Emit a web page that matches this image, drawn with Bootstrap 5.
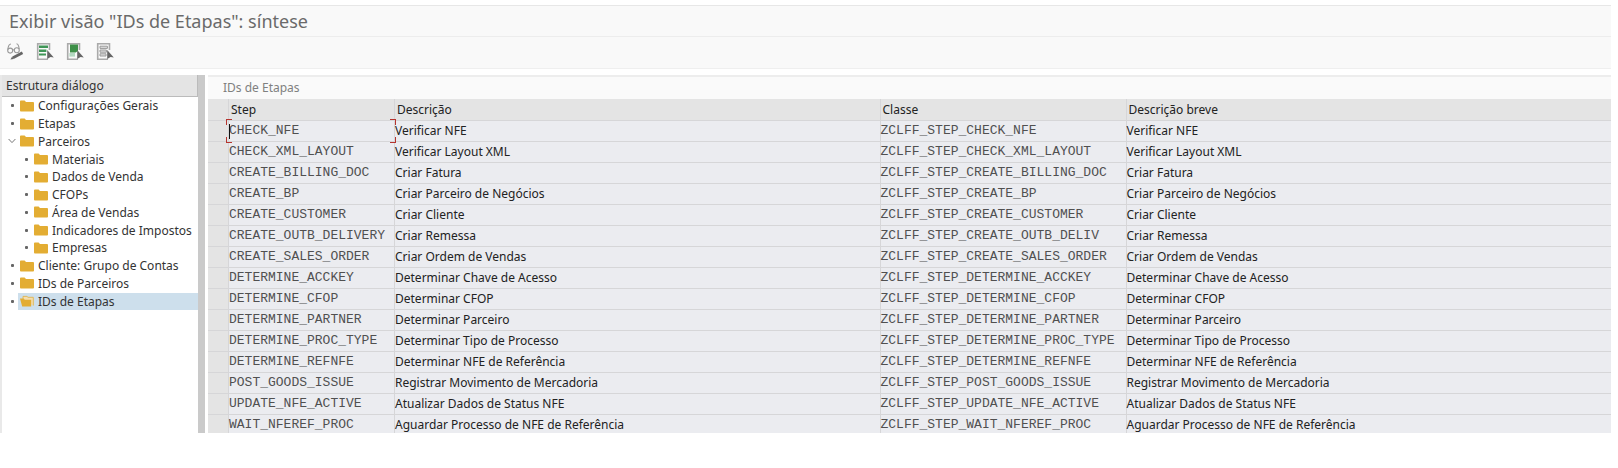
<!DOCTYPE html>
<html lang="pt-BR">
<head>
<meta charset="utf-8">
<meta name="viewport" content="width=device-width, initial-scale=1">
<title>IDs de Etapas</title>
<link href="https://cdn.jsdelivr.net/npm/bootstrap@5.3.0/dist/css/bootstrap.min.css" rel="stylesheet">
<style>
  body { font: 12px/18px "Noto Sans", "Open Sans", sans-serif; color: #333; background: #fff; }
  .app { padding: 5px 7px 0 0; }
  .titlebar { background: #f9f9f9; border-top: 1px solid #e7e7e7; border-bottom: 1px solid #ededed; padding: 0 9px; }
  .titlebar h1 { font-size: 18px; line-height: 30px; color: #6a6a6a; font-weight: 400; }
  .toolbar { background: #f9f9f9; border-bottom: 1px solid #efefef; gap: 10px; padding: 5px 6px 6px; margin-bottom: 6px; }
  .tool { width: 20px; height: 20px; padding: 0; border: 0; background: none; }
  .tool svg { display: block; }

  .tree-pane { width: 198px; border-left: 2px solid #e9e9e9; }
  .tree-head { background: #e4e4e4; border: solid #bbb; border-width: 0 1px 1px 0; padding: 1px 0 0 4px; line-height: 20px; font-size: 12px; }
  .tree { display: grid; grid-auto-rows: 1fr; height: 213px; list-style: none; margin: 0; padding: 0; }
  .tree li, .tree ul { display: contents; }
  .tree ul .node { padding-left: 14px; }
  .tree a { color: inherit; text-decoration: none; flex: 1; display: flex; align-items: center; gap: 4px; padding-left: 2px; white-space: nowrap; line-height: 17px; }
  .node { display: flex; align-items: center; min-height: 0; }
  .mark-box { width: 16px; display: flex; justify-content: center; padding-left: 4px; }
  .dot { width: 3px; height: 3px; border-radius: 1px; background: #666; }
  .picked a { background: #cddfec; }
  .splitter { width: 7px; background: #cacaca; margin-right: 3px; }

  .grid-pane { min-width: 0; height: 358px; overflow: hidden; border-top: 2px solid #ededed; }
  .grid-title { background: #fafafa; color: #808080; line-height: 22px; padding-left: 15px; }
  .data-grid { width: 100%; table-layout: fixed; border-collapse: separate; border-spacing: 0; line-height: 20px; }
  .data-grid th, .data-grid td { white-space: nowrap; padding: 0; height: 21px; border: solid #d6d6d8; border-width: 0 0 1px 1px; background: #ebecf0; color: #222; }
  .data-grid th { font-weight: 400; background: #e4e4e4; padding-left: 2px; line-height: 21px; }
  .data-grid .sel { border-left: 0; background: #e4e4e4; }
  .data-grid .code { font-family: "Liberation Mono", monospace; font-size: 13px; color: #505050; }
  .sel { width: 20px; }
  .col-step { width: 166px; }
  .col-class { width: 246px; }
  .active-cell { position: relative; }
  .active-cell input { display: block; width: 100%; height: 20px; padding: 0; border: 0; outline: 0; background: none; font: inherit; color: inherit; }
  .corners { position: absolute; inset: -2px -2px -2px -3px; pointer-events: none; }
  .corners i { position: absolute; width: 6px; height: 6px; border: 0 solid #b5342f; }
  .corners .tl { left: 0; top: 0; border-width: 1px 0 0 1px; }
  .corners .tr { right: 0; top: 0; border-width: 1px 1px 0 0; }
  .corners .bl { left: 0; bottom: 0; border-width: 0 0 1px 1px; }
  .corners .br { right: 0; bottom: 0; border-width: 0 1px 1px 0; }
  .caret { position: absolute; left: 0; top: 3px; width: 1px; height: 15px; background: #111; }
</style>
</head>
<body>
<svg class="d-none" xmlns="http://www.w3.org/2000/svg">
  <symbol id="folder" viewBox="0 0 14 12"><path d="M0 1.5Q0 .6 .9 .6H4.6L6 2.1H13.1Q14 2.1 14 3V10.6Q14 11.5 13.1 11.5H.9Q0 11.5 0 10.6Z" fill="#e3ad33"/></symbol>
  <symbol id="folder-open" viewBox="0 0 14 12"><path d="M3 4V1.4H7L8 2.3H13.3V10.6" fill="#f3deb0" stroke="#e0b450" stroke-width=".9"/><path d="M0 3.4H3.6L4.8 4.7H11.2V11.5H2.2Z" fill="#e3ad33"/></symbol>
  <symbol id="pointer" viewBox="0 0 8 9"><path d="M1.2 0 7.8 7.4 4.6 7 1.2 9Z" fill="#666"/></symbol>
</svg>

<div class="app">
  <header class="titlebar"><h1 class="m-0">Exibir visão "IDs de Etapas": síntese</h1></header>
  <div class="toolbar d-flex" role="toolbar" aria-label="Ações">
    <button class="tool" type="button" aria-label="Exibir / modificar">
      <svg width="20" height="20" viewBox="0 0 20 20" fill="none"><g stroke="#999" stroke-width="1.1"><circle cx="4.2" cy="8.6" r="2.5"/><circle cx="10.8" cy="8.2" r="2.5"/><path d="M6.7 8.2q.8-.8 1.6 0M1.8 7.5Q2.4 2.2 5 2M13.2 7Q12.6 2 10.5 1.8"/></g><path d="M7 15.8 16.5 10.8" stroke="#666" stroke-width="2.8"/><path d="M4.4 17.6 6.2 14.4 7.8 17Z" fill="#666"/></svg>
    </button>
    <button class="tool" type="button" aria-label="Marcar tudo">
      <svg width="20" height="20" viewBox="0 0 20 20"><path d="M13.5 8V1.7H1.7V17.3H12" fill="none" stroke="#aaa" stroke-width="1.6"/><path d="M3 3.6H12V6H3ZM3 7.6H10.4V10H3ZM3 11.4H10V13.6H3Z" fill="#3f9556"/><use href="#pointer" x="10" y="8" width="8" height="9"/></svg>
    </button>
    <button class="tool" type="button" aria-label="Marcar bloco">
      <svg width="20" height="20" viewBox="0 0 20 20"><path d="M13.5 8V1.7H1.7V17.3H12" fill="none" stroke="#aaa" stroke-width="1.6"/><path d="M4 2.6H12V9L9.6 10.6H4Z" fill="#3e9048"/><path d="M3.4 11H9V14.6H3.4Z" fill="#b2d8c0"/><use href="#pointer" x="10" y="8" width="8" height="9"/></svg>
    </button>
    <button class="tool" type="button" aria-label="Desmarcar tudo">
      <svg width="20" height="20" viewBox="0 0 20 20"><path d="M13.5 8V1.7H1.7V17.3H12" fill="none" stroke="#aaa" stroke-width="1.6"/><path d="M4 4.2H11.4V6.4H4ZM4 8H10.4V10.2H4ZM4 11.8H10V14H4Z" fill="#ddd" stroke="#999"/><use href="#pointer" x="10" y="8" width="8" height="9"/></svg>
    </button>
  </div>

  <main class="d-flex">
    <nav class="tree-pane flex-shrink-0" aria-label="Estrutura diálogo">
      <h2 class="tree-head m-0 fw-normal">Estrutura diálogo</h2>
      <ul class="tree">
        <li><div class="node"><span class="mark-box"><i class="dot"></i></span><a href="#"><svg width="14" height="12"><use href="#folder"/></svg>Configurações Gerais</a></div></li>
        <li><div class="node"><span class="mark-box"><i class="dot"></i></span><a href="#"><svg width="14" height="12"><use href="#folder"/></svg>Etapas</a></div></li>
        <li><div class="node"><span class="mark-box"><svg width="8" height="6" viewBox="0 0 8 6"><path d="M.6 1 4 4.6 7.4 1" fill="none" stroke="#777"/></svg></span><a href="#"><svg width="14" height="12"><use href="#folder"/></svg>Parceiros</a></div>
          <ul>
            <li><div class="node"><span class="mark-box"><i class="dot"></i></span><a href="#"><svg width="14" height="12"><use href="#folder"/></svg>Materiais</a></div></li>
            <li><div class="node"><span class="mark-box"><i class="dot"></i></span><a href="#"><svg width="14" height="12"><use href="#folder"/></svg>Dados de Venda</a></div></li>
            <li><div class="node"><span class="mark-box"><i class="dot"></i></span><a href="#"><svg width="14" height="12"><use href="#folder"/></svg>CFOPs</a></div></li>
            <li><div class="node"><span class="mark-box"><i class="dot"></i></span><a href="#"><svg width="14" height="12"><use href="#folder"/></svg>Área de Vendas</a></div></li>
            <li><div class="node"><span class="mark-box"><i class="dot"></i></span><a href="#"><svg width="14" height="12"><use href="#folder"/></svg>Indicadores de Impostos</a></div></li>
            <li><div class="node"><span class="mark-box"><i class="dot"></i></span><a href="#"><svg width="14" height="12"><use href="#folder"/></svg>Empresas</a></div></li>
          </ul>
        </li>
        <li><div class="node"><span class="mark-box"><i class="dot"></i></span><a href="#"><svg width="14" height="12"><use href="#folder"/></svg>Cliente: Grupo de Contas</a></div></li>
        <li><div class="node"><span class="mark-box"><i class="dot"></i></span><a href="#"><svg width="14" height="12"><use href="#folder"/></svg>IDs de Parceiros</a></div></li>
        <li><div class="node picked"><span class="mark-box"><i class="dot"></i></span><a href="#" aria-current="true"><svg width="14" height="12"><use href="#folder-open"/></svg>IDs de Etapas</a></div></li>
      </ul>
    </nav>
    <div class="splitter flex-shrink-0"></div>
    <section class="grid-pane flex-grow-1">
      <div class="grid-title" id="grid-title">IDs de Etapas</div>
      <table class="data-grid" aria-labelledby="grid-title">
        <colgroup><col class="sel"><col class="col-step"><col><col class="col-class"><col></colgroup>
        <thead><tr><th class="sel"></th><th id="step">Step</th><th>Descrição</th><th>Classe</th><th>Descrição breve</th></tr></thead>
        <tbody>
          <tr><td class="sel"></td><td class="code active-cell"><input type="text" value="CHECK_NFE" aria-labelledby="step" readonly><span class="corners"><i class="tl"></i><i class="tr"></i><i class="bl"></i><i class="br"></i></span><span class="caret"></span></td><td>Verificar NFE</td><td class="code">ZCLFF_STEP_CHECK_NFE</td><td>Verificar NFE</td></tr>
          <tr><td class="sel"></td><td class="code">CHECK_XML_LAYOUT</td><td>Verificar Layout XML</td><td class="code">ZCLFF_STEP_CHECK_XML_LAYOUT</td><td>Verificar Layout XML</td></tr>
          <tr><td class="sel"></td><td class="code">CREATE_BILLING_DOC</td><td>Criar Fatura</td><td class="code">ZCLFF_STEP_CREATE_BILLING_DOC</td><td>Criar Fatura</td></tr>
          <tr><td class="sel"></td><td class="code">CREATE_BP</td><td>Criar Parceiro de Negócios</td><td class="code">ZCLFF_STEP_CREATE_BP</td><td>Criar Parceiro de Negócios</td></tr>
          <tr><td class="sel"></td><td class="code">CREATE_CUSTOMER</td><td>Criar Cliente</td><td class="code">ZCLFF_STEP_CREATE_CUSTOMER</td><td>Criar Cliente</td></tr>
          <tr><td class="sel"></td><td class="code">CREATE_OUTB_DELIVERY</td><td>Criar Remessa</td><td class="code">ZCLFF_STEP_CREATE_OUTB_DELIV</td><td>Criar Remessa</td></tr>
          <tr><td class="sel"></td><td class="code">CREATE_SALES_ORDER</td><td>Criar Ordem de Vendas</td><td class="code">ZCLFF_STEP_CREATE_SALES_ORDER</td><td>Criar Ordem de Vendas</td></tr>
          <tr><td class="sel"></td><td class="code">DETERMINE_ACCKEY</td><td>Determinar Chave de Acesso</td><td class="code">ZCLFF_STEP_DETERMINE_ACCKEY</td><td>Determinar Chave de Acesso</td></tr>
          <tr><td class="sel"></td><td class="code">DETERMINE_CFOP</td><td>Determinar CFOP</td><td class="code">ZCLFF_STEP_DETERMINE_CFOP</td><td>Determinar CFOP</td></tr>
          <tr><td class="sel"></td><td class="code">DETERMINE_PARTNER</td><td>Determinar Parceiro</td><td class="code">ZCLFF_STEP_DETERMINE_PARTNER</td><td>Determinar Parceiro</td></tr>
          <tr><td class="sel"></td><td class="code">DETERMINE_PROC_TYPE</td><td>Determinar Tipo de Processo</td><td class="code">ZCLFF_STEP_DETERMINE_PROC_TYPE</td><td>Determinar Tipo de Processo</td></tr>
          <tr><td class="sel"></td><td class="code">DETERMINE_REFNFE</td><td>Determinar NFE de Referência</td><td class="code">ZCLFF_STEP_DETERMINE_REFNFE</td><td>Determinar NFE de Referência</td></tr>
          <tr><td class="sel"></td><td class="code">POST_GOODS_ISSUE</td><td>Registrar Movimento de Mercadoria</td><td class="code">ZCLFF_STEP_POST_GOODS_ISSUE</td><td>Registrar Movimento de Mercadoria</td></tr>
          <tr><td class="sel"></td><td class="code">UPDATE_NFE_ACTIVE</td><td>Atualizar Dados de Status NFE</td><td class="code">ZCLFF_STEP_UPDATE_NFE_ACTIVE</td><td>Atualizar Dados de Status NFE</td></tr>
          <tr><td class="sel"></td><td class="code">WAIT_NFEREF_PROC</td><td>Aguardar Processo de NFE de Referência</td><td class="code">ZCLFF_STEP_WAIT_NFEREF_PROC</td><td>Aguardar Processo de NFE de Referência</td></tr>
        </tbody>
      </table>
    </section>
  </main>
</div>
<script src="https://cdn.jsdelivr.net/npm/bootstrap@5.3.0/dist/js/bootstrap.bundle.min.js"></script>
</body>
</html>
